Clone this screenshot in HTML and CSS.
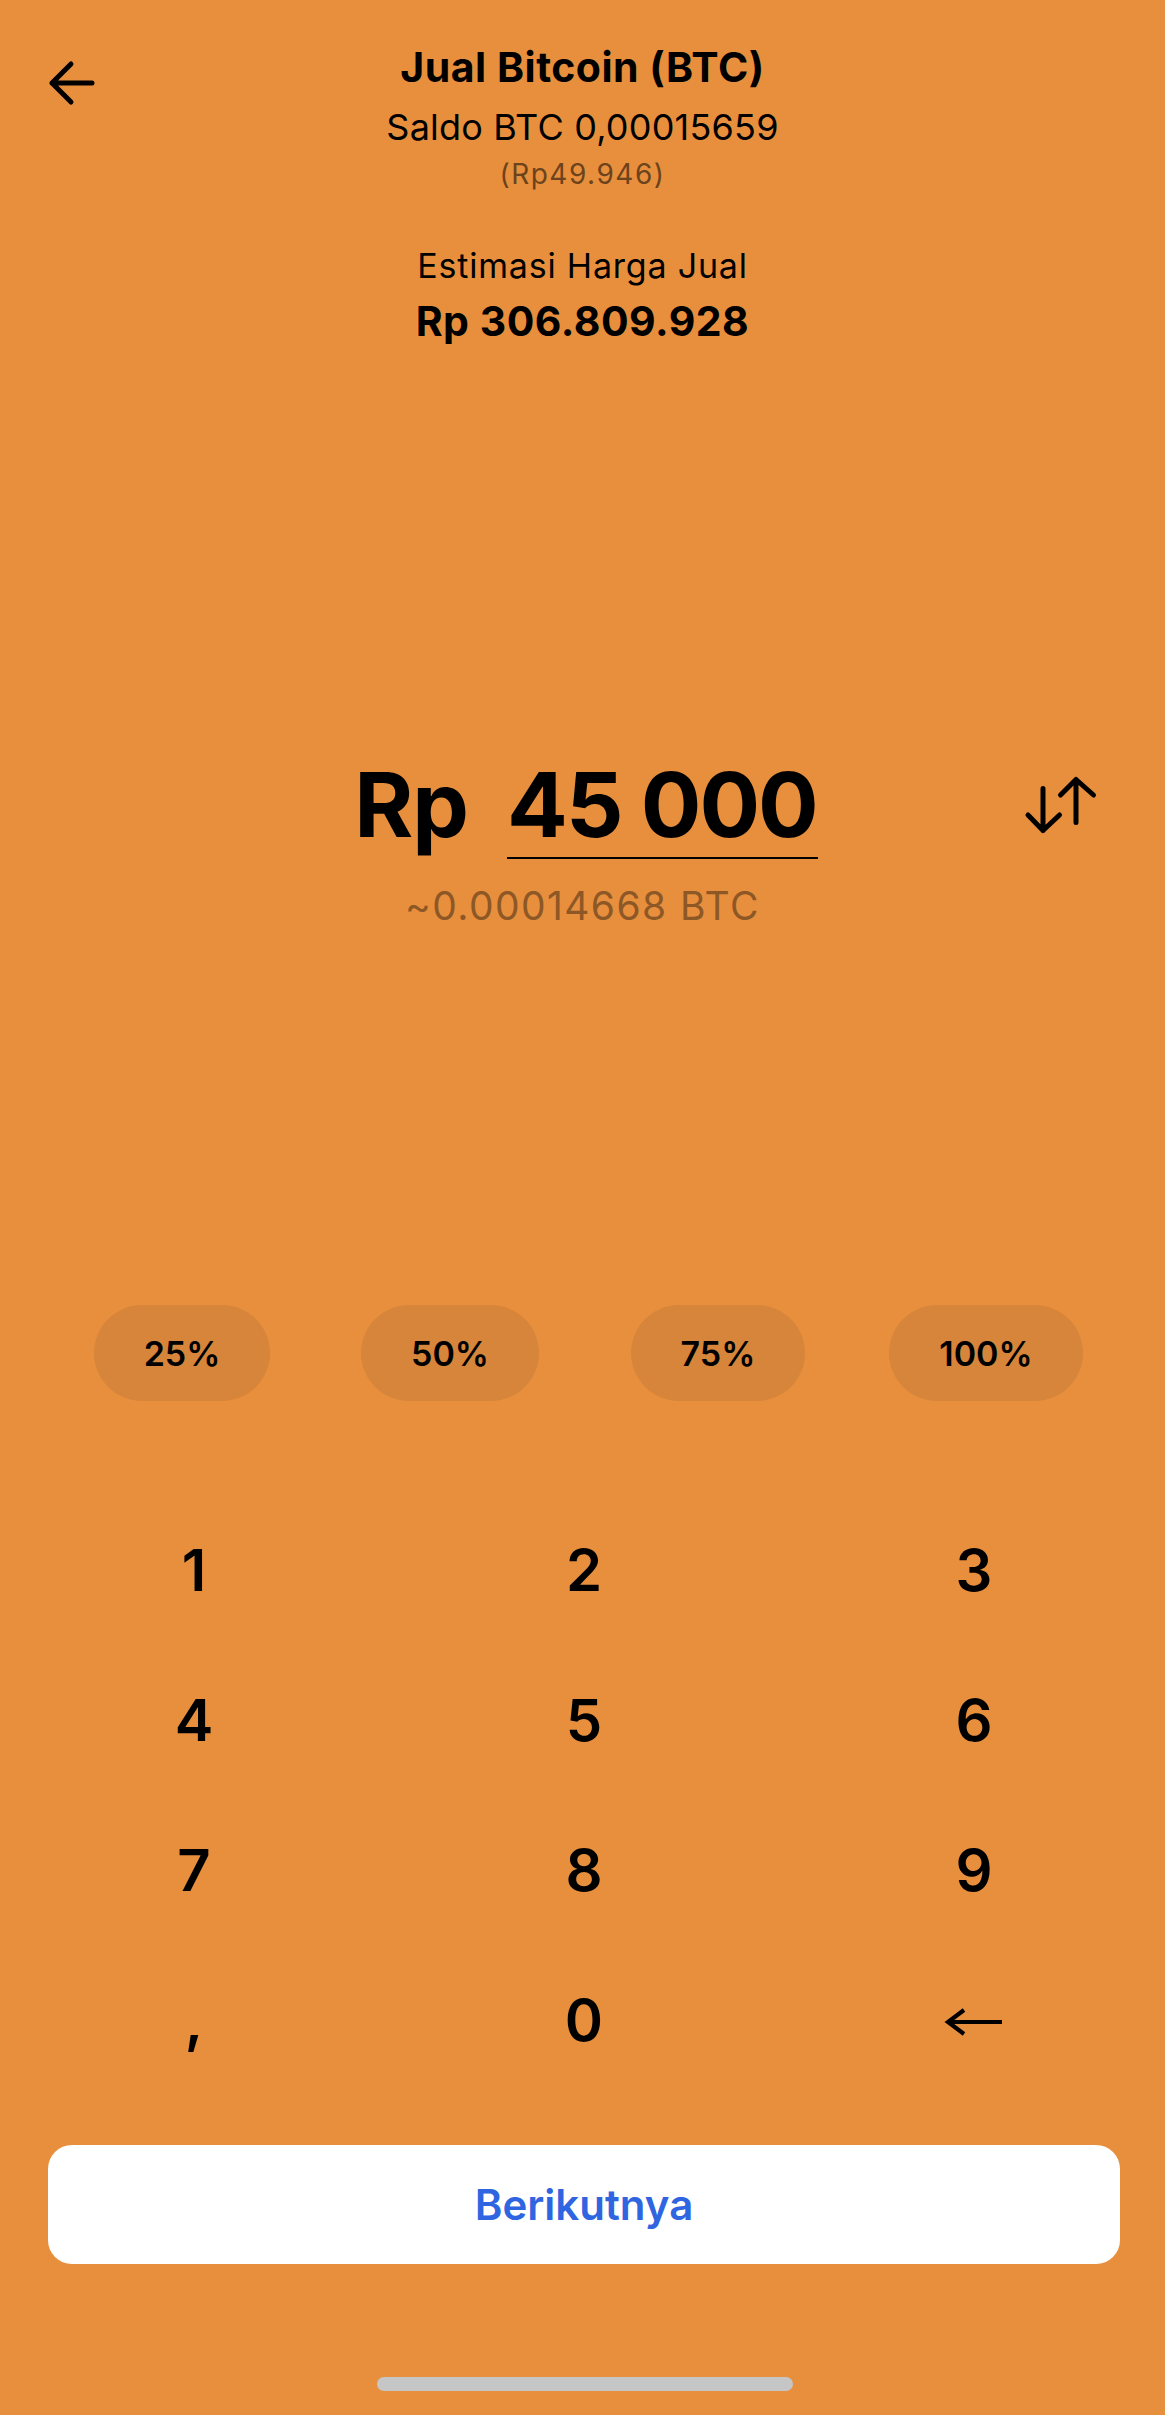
FILE: index.html
```html
<!DOCTYPE html>
<html lang="id">
<head>
<meta charset="utf-8">
<title>Jual Bitcoin (BTC)</title>
<link rel="stylesheet" href="styles.css">
</head>
<body>
<div class="screen">
  <header class="top">
    <div class="top-left">
      <svg class="back" width="50" height="48" viewBox="0 0 50 48" fill="none" stroke="#000" stroke-width="5" stroke-linecap="round" stroke-linejoin="round">
        <path d="M46 24H6M25 5L6 24L25 43"/>
      </svg>
    </div>
    <div class="heading">
      <div class="title">Jual Bitcoin (BTC)</div>
      <div class="balance">Saldo BTC 0,00015659</div>
      <div class="balance-idr">(Rp49.946)</div>
    </div>
    <div></div>
  </header>

  <section class="estimate">
    <div class="est-label">Estimasi Harga Jual</div>
    <div class="est-value">Rp 306.809.928</div>
  </section>

  <section class="amount-row">
    <div></div>
    <div class="amount">
      <span class="cur">Rp</span>
      <span class="num">45 000</span>
    </div>
    <div class="swap-cell">
      <svg class="swap" width="76" height="62" viewBox="0 0 76 62" fill="none" stroke="#000" stroke-width="5" stroke-linecap="round" stroke-linejoin="round">
        <path d="M21 14.5V56.5M6 41L21 56.5L37.5 41M54 48.5V5.5M38.5 21L54 5.5L71.5 21"/>
      </svg>
    </div>
  </section>

  <div class="approx">~0.00014668 BTC</div>

  <div class="pills">
    <div class="pill">25%</div>
    <div class="pill">50%</div>
    <div class="pill">75%</div>
    <div class="pill">100%</div>
  </div>

  <div class="keypad">
    <div class="key">1</div>
    <div class="key">2</div>
    <div class="key">3</div>
    <div class="key">4</div>
    <div class="key">5</div>
    <div class="key">6</div>
    <div class="key">7</div>
    <div class="key">8</div>
    <div class="key">9</div>
    <div class="key">,</div>
    <div class="key">0</div>
    <div class="key">
      <svg class="bksp" width="60" height="30" viewBox="0 0 60 30" fill="none" stroke="#000" stroke-width="4.2" stroke-linejoin="miter">
        <path d="M4 15H58M20 3L4 15L20 27"/>
      </svg>
    </div>
  </div>

  <button class="next">Berikutnya</button>

  <div class="home"></div>
</div>
</body>
</html>
```

FILE: styles.css
```css
* {
  box-sizing: border-box;
}

html, body {
  margin: 0;
  padding: 0;
  background: #E88F3D;
}

body {
  font-family: "Inter", "Noto Sans", sans-serif;
  color: #000;
}

.screen {
  width: 1165px;
  height: 2415px;
  overflow: hidden;
  display: flex;
  flex-direction: column;
  background: #E88F3D;
}

.top {
  display: grid;
  grid-template-columns: 1fr auto 1fr;
  padding-top: 43px;
}

.top-left {
  padding-left: 46px;
  padding-top: 16px;
}

.back {
  display: block;
}

.heading {
  display: flex;
  flex-direction: column;
  align-items: center;
  text-align: center;
}

.title {
  font-size: 41px;
  line-height: 48px;
  font-weight: 700;
  letter-spacing: 0.5px;
}

.balance {
  margin-top: 14px;
  font-size: 36px;
  line-height: 44px;
  font-weight: 400;
  letter-spacing: 0.2px;
}

.balance-idr {
  margin-top: 8px;
  font-size: 28px;
  line-height: 34px;
  letter-spacing: 1.5px;
  color: #6B431C;
}

.estimate {
  display: flex;
  flex-direction: column;
  align-items: center;
  text-align: center;
  margin-top: 55px;
}

.est-label {
  font-size: 34px;
  line-height: 40px;
  letter-spacing: 0.8px;
}

.est-value {
  margin-top: 11px;
  font-size: 41px;
  line-height: 48px;
  font-weight: 700;
  letter-spacing: 0.5px;
}

.amount-row {
  display: grid;
  grid-template-columns: 1fr auto 1fr;
  margin-top: 410px;
  padding-left: 7px;
}

.amount {
  display: flex;
  align-items: baseline;
  gap: 39px;
  font-weight: 700;
  font-size: 90px;
  line-height: 100px;
}

.cur {
  letter-spacing: -1px;
}

.num {
  display: inline-block;
  padding: 0 1px 2px 0;
  letter-spacing: -2px;
  border-bottom: 2px solid #000;
}

.swap-cell {
  display: flex;
  justify-content: flex-end;
  align-items: flex-start;
  padding-right: 67px;
  padding-top: 19px;
}

.approx {
  margin-top: 25px;
  text-align: center;
  font-size: 39px;
  line-height: 44px;
  letter-spacing: 1.4px;
  color: #8D5726;
}

.pills {
  margin: 377px 45px 0 48px;
  display: grid;
  grid-template-columns: repeat(4, 1fr);
}

.pill {
  justify-self: center;
  height: 96px;
  padding: 0 50px;
  border-radius: 48px;
  background: #D6853A;
  display: flex;
  align-items: center;
  font-size: 34px;
  font-weight: 600;
}

.keypad {
  margin-top: 94px;
  margin-left: -1px;
  display: grid;
  grid-template-columns: repeat(3, 390px);
  grid-auto-rows: 150px;
}

.key {
  display: flex;
  align-items: center;
  justify-content: center;
  font-size: 58px;
  line-height: 150px;
  font-weight: 600;
}

.bksp {
  display: block;
  margin-top: 4px;
}

.next {
  margin: 50px 45px 0 48px;
  height: 119px;
  border: none;
  border-radius: 24px;
  background: #fff;
  color: #2F65E0;
  font-family: "Inter", "Noto Sans", sans-serif;
  font-size: 42px;
  font-weight: 600;
  padding: 0;
}

.home {
  margin: 113px 0 0 377px;
  width: 416px;
  height: 14px;
  border-radius: 7px;
  background: #C6C6C6;
}
```
